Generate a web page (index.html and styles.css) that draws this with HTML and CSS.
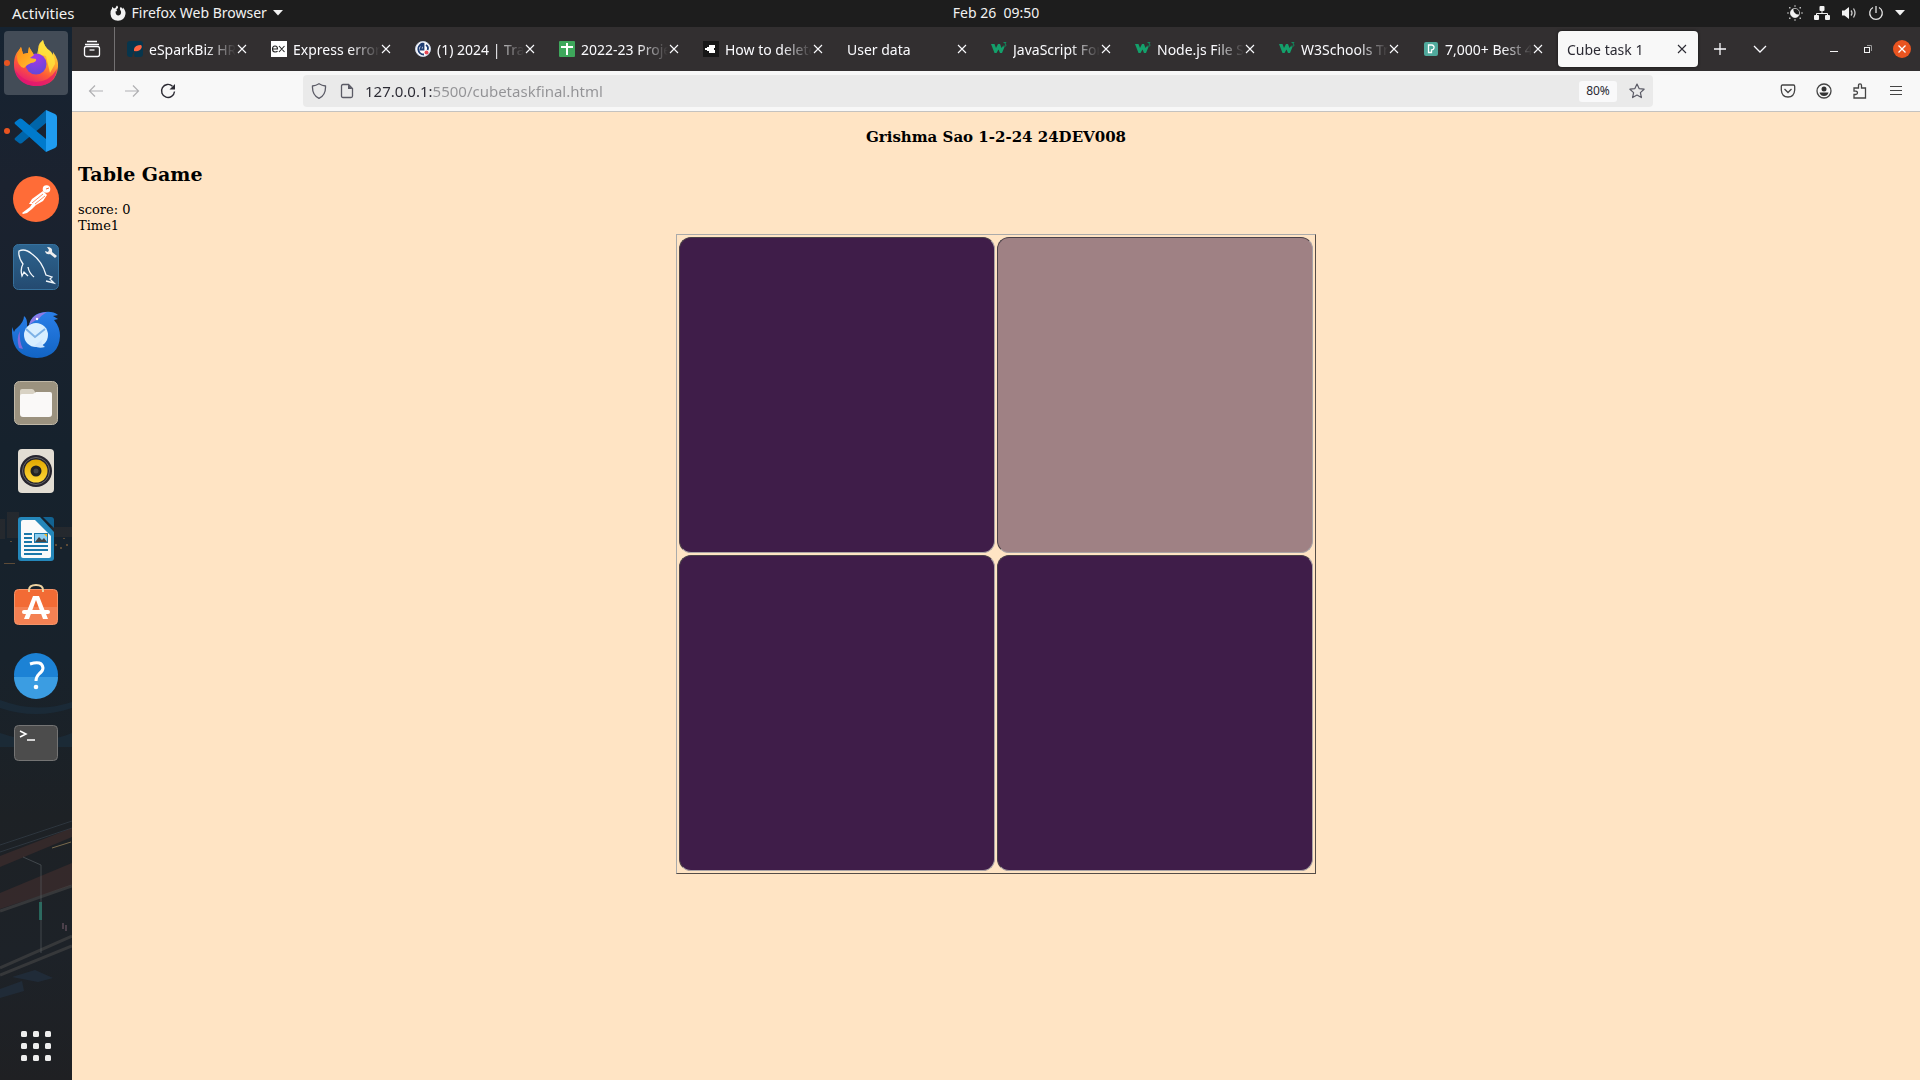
FILE: index.html
```html
<!DOCTYPE html>
<html lang="en">
<head>
<meta charset="utf-8">
<title>Cube task 1</title>
<link rel="stylesheet" href="styles.css">
</head>
<body>
<svg class="defs" width="0" height="0" aria-hidden="true">
  <defs>
    <linearGradient id="ffBody" x1="0.8" y1="0" x2="0.3" y2="1"><stop offset="0" stop-color="#fff44f"/><stop offset=".35" stop-color="#ffb02e"/><stop offset=".65" stop-color="#ff5a36"/><stop offset="1" stop-color="#e3147d"/></linearGradient>
    <linearGradient id="ffEar" x1="0" y1="0" x2="1" y2="1"><stop offset="0" stop-color="#ff8a16"/><stop offset="1" stop-color="#ffc42e"/></linearGradient>
    <radialGradient id="ffGlobe" cx=".5" cy=".2" r=".9"><stop offset="0" stop-color="#a438e8"/><stop offset="1" stop-color="#5a4ad6"/></radialGradient>
    <linearGradient id="tb" x1="0" y1="0" x2="0" y2="1"><stop offset="0" stop-color="#2a7fe8"/><stop offset="1" stop-color="#1264c4"/></linearGradient>
    <linearGradient id="sql" x1="0" y1="0" x2="0" y2="1"><stop offset="0" stop-color="#2c648f"/><stop offset="1" stop-color="#244a70"/></linearGradient>
    <linearGradient id="gold" x1="0" y1="0" x2="0" y2="1"><stop offset="0" stop-color="#e2a800"/><stop offset="1" stop-color="#ffd83a"/></linearGradient>
    <symbol id="x" viewBox="0 0 12 12"><path d="M2 2l8 8M10 2l-8 8" fill="none" stroke="currentColor" stroke-width="1.1"/></symbol>
    <symbol id="w3" viewBox="0 0 16 16"><path d="M0 3h3.500l1.500 4 2-4h2l1.500 4 1.500-2 1.500 1-2.500 6H9L7.500 8.500 5.500 12H3.500z" fill="#14a06b"/><path d="M12.500 1.500h2.500l-1.200 1.500q1.600.2 1.200 1.600-.8 1.200-2.500.3" fill="none" stroke="#128a5d" stroke-width="1"/></symbol>
  </defs>
</svg>

<header class="panel">
  <div class="panel-left">
    <button class="panel-btn activities">Activities</button>
    <button class="panel-btn app-menu">
      <svg width="16" height="16" viewBox="0 0 16 16"><path d="M7 0.500C8 1.500 8.200 2.200 8 3L6.500 4.200 7 6 5.500 6.500Q5.500 10.500 8.500 10.500 11.500 10 11 6.500L9.800 4 10.500 2Q12 2.500 12.800 4L13 2.500Q16 6 15.500 9 14.500 15.500 8 15.800 1 15.500.5 9 .2 5.500 2 3.500L2.200 1.800 4 3.400 5.500 3Q5.800 1.500 7 .5z" fill="#f2f2f2"/></svg>
      <span>Firefox Web Browser</span>
      <svg width="10" height="6" viewBox="0 0 10 6"><path d="M0 0h10L5 5.500z" fill="#f2f2f2"/></svg>
    </button>
  </div>
  <time class="clock">Feb 26&nbsp; 09:50</time>
  <div class="tray">
    <svg width="16" height="16" viewBox="0 0 16 16"><circle cx="8" cy="8" r="4.600" fill="none" stroke="#aaa" stroke-width="1"/><path d="M6.500 3.600A4.600 4.600 0 1 0 12.300 9.500 5 5 0 0 1 6.500 3.600z" fill="#f2f2f2"/><g fill="#bbb"><path d="M7.500 0h1v2h-1zM7.500 14h1v2h-1zM0 7.500h2v1H0zM14 7.500h2v1h-2zM2 2h1.500v1.500H2zM12.500 2H14v1.500h-1.500zM2 12.500h1.500V14H2zM12.500 12.500H14V14h-1.500z"/></g></svg>
    <svg width="16" height="16" viewBox="0 0 16 16"><g fill="#f2f2f2"><rect x="5.500" y="1" width="5" height="5" rx="1"/><rect x="0" y="10" width="5" height="5" rx="1"/><rect x="11" y="10" width="5" height="5" rx="1"/></g><path d="M8 6v2.500M2.500 10V8.500h11V10" fill="none" stroke="#f2f2f2"/></svg>
    <svg width="16" height="16" viewBox="0 0 16 16"><path d="M1 5.500h2.500L8 2v12L3.500 10.500H1z" fill="#f2f2f2"/><path d="M10 5.500q2 2.500 0 5M12.500 3.500q3 4.500 0 9" fill="none" stroke="#ccc" stroke-width="1.300"/></svg>
    <svg width="16" height="16" viewBox="0 0 16 16"><path d="M5 2.500A6.300 6.300 0 1 0 11 2.500M8 1v7" fill="none" stroke="#e4e4e4" stroke-width="1.300"/></svg>
    <svg width="10" height="6" viewBox="0 0 10 6"><path d="M0 0h10L5 5.500z" fill="#f2f2f2"/></svg>
  </div>
</header>

<div class="desktop">
<nav class="dock" aria-label="Dock">
  <svg class="wallpaper" viewBox="0 0 72 1053" preserveAspectRatio="none" aria-hidden="true">
    <g fill="#443c36" opacity=".3"><path d="M7 485h12v26H7zM22 496h16v16H22zM0 492h5v20H0zM44 500h28v10H44z"/></g>
    <g fill="#c98a48" opacity=".4"><path d="M55 517h2v2h-2zM60 520h2v2h-2zM66 517h2v2h-2zM10 514h2v1h-2zM24 515h2v1h-2zM63 511h2v1h-2zM4 536h11v1H4z"/></g>
    <path d="M0 673q36 14 72 2v6q-36 12-72 0zM0 706q40 14 72 0v14H0z" fill="#1d3f58" opacity=".3"/>
    <path d="M0 818L72 794M0 825L72 801" stroke="#465562" opacity=".4"/>
    <path d="M0 829L72 801v9L0 840zM0 866L72 836v22L0 882z" fill="#6a3b35" opacity=".3"/>
    <path d="M0 884L72 859M0 941L72 909M0 948L72 919" stroke="#706b66" stroke-width="3" opacity=".3"/>
    <path d="M52 821L71 815" stroke="#b79b67" opacity=".6"/>
    <path d="M23 830l18 8v88" fill="none" stroke="#5a6165" opacity=".6"/>
    <path d="M39 875h3v18h-3z" fill="#2c8171" opacity=".7"/>
    <path d="M62 896h2v6h-2zM65 898h2v6h-2z" fill="#6a5563" opacity=".6"/>
    <path d="M12 950l23-7 18 8-15 4zM0 962l22-8 2 10-24 7z" fill="#27415f" opacity=".3"/>
  </svg>
  <button class="dock-item running active" aria-label="Firefox"><svg width="48" height="48" viewBox="0 0 48 48"><path d="M24 47C11 47 2 38 2 26 2 18 4 14 7 11l2-3 2 7 5-1 1-6 5 8 5-1Q24 6 31 1q1 7 7 11 2 2 3 5l0-4q6 8 5 15-2 19-22 19z" fill="url(#ffBody)"/><path d="M25 15Q27 6 31 1q1 7 7 11 5 4 5 13L38 34 34 17z" fill="#ffe53d" opacity=".8"/><circle cx="24" cy="25" r="10.500" fill="url(#ffGlobe)"/><path d="M7 11l2-3 2 7 5-1 1-6 5 8-4 3 6 1q1 3-5 4-5 2-7 5Q5 27 5 17z" fill="url(#ffEar)"/><path d="M3 31q8 12 21 12T45 30q-2 17-21 17Q6 46 3 31z" fill="#df156e" opacity=".7"/></svg></button>
  <button class="dock-item running" aria-label="Visual Studio Code"><svg width="48" height="48" viewBox="0 0 48 48"><path d="M3 31q-1 1 0 2l4 3q1 1 3 0L34 16V3z" fill="#0065a9"/><path d="M3 17q-1-1 0-2l4-3q1-1 3 0L34 32v13z" fill="#007acc"/><path d="M34 3l9 4q2 1 2 3v28q0 2-2 3l-9 4z" fill="#1f9cf0"/></svg></button>
  <button class="dock-item" aria-label="Postman"><svg width="48" height="48" viewBox="0 0 48 48"><circle cx="24" cy="24" r="23" fill="#ff6c37"/><circle cx="34.500" cy="14" r="3.800" fill="#fff"/><path d="M34 14l3-1" stroke="#ff6c37"/><path d="M31 16L20 24 17 29l3 0-2 3-8 6 1 1 4-1 5-4 4-4 7-4 4-6z" fill="#fff"/><path d="M31 19L20 28M33 21l-10 8" stroke="#ff6c37" stroke-width=".8"/></svg></button>
  <button class="dock-item" aria-label="MySQL Workbench"><svg width="48" height="48" viewBox="0 0 48 48"><rect x="1.500" y="1.500" width="45" height="45" rx="5" fill="url(#sql)" stroke="#36719d"/><path d="M16 33l-4-4-2 4Q8 26 11 21 6 14 7 8q6-3 13 3 10 7 14 21l6 2-2 2 4 4-8-2M16 24q1 6 6 10" fill="none" stroke="#f2f7fb" stroke-width="1.300"/><path d="M35 4l2 3-1 2-3-1q1 4 5 3l5 4 2-2-5-4q1-5-5-5z" fill="#eee"/></svg></button>
  <button class="dock-item" aria-label="Thunderbird"><svg width="48" height="48" viewBox="0 0 48 48"><path d="M5 17Q12 11 12 5q4 3 3 11L17 14Q20 2 33 1q8-1 13 3l-5 1 5 3-4 1Q48 16 48 25 47 46 25 47 1 46 0 22l0-6 2 5q1-3 3-4z" fill="url(#tb)"/><path d="M7 37Q4 27 8 20q-1 10 3 18z" fill="#8269d8"/><path d="M17 14Q20 2 35 1q-7 4-8 7-4 1-10 6z" fill="#8d7be6"/><circle cx="24" cy="24" r="12" fill="#d9efff"/><path d="M14 18l9 8 10-8" fill="none" stroke="#7db2e6" stroke-width="2"/><path d="M22 35q5 3 11 1-6-4-2-8z" fill="#cbe5ff"/><circle cx="25" cy="8" r="1.200" fill="#fff"/></svg></button>
  <button class="dock-item" aria-label="Files"><svg width="48" height="48" viewBox="0 0 48 48"><rect x="2.500" y="2.500" width="43" height="43" rx="5" fill="#9b927f" stroke="#c0b8a7"/><path d="M8 12q0-2 2-2h10q2 0 3 3v5H8z" fill="#d8d2c4"/><path d="M8 17q0-2 2-2h11l3-2h14q2 0 2 2v20q0 3-3 3H11q-3 0-3-3z" fill="#faf9f8"/></svg></button>
  <button class="dock-item" aria-label="Rhythmbox"><svg width="48" height="48" viewBox="0 0 48 48"><rect x="6" y="2" width="36" height="44" rx="4" fill="#e2ddd3"/><circle cx="24" cy="24" r="16" fill="#26242e"/><circle cx="24" cy="24" r="13.500" fill="none" stroke="#666"/><circle cx="24" cy="24" r="11.500" fill="url(#gold)"/><circle cx="24" cy="24" r="5.500" fill="#222"/><circle cx="24" cy="24" r="2.500" fill="#444"/></svg></button>
  <button class="dock-item" aria-label="LibreOffice Writer"><svg width="48" height="48" viewBox="0 0 48 48"><path d="M9 2h19l14 15v26q0 3-3 3H9q-3 0-3-3V5q0-3 3-3z" fill="#2487ba"/><path d="M31 2h8q3 0 3 3v8z" fill="#126392"/><path d="M11 5h12l16 16v20q0 2-2 2H11q-2 0-2-2V7q0-2 2-2z" fill="#fafafa"/><path d="M12 19h8M12 23h8M12 27h8M12 31h24M12 35h24M12 39h18" stroke="#1b78aa" stroke-width="2"/><rect x="22.500" y="18.500" width="13" height="9" fill="#8ccdf0" stroke="#1b78aa"/><path d="M23 27l4-5 3 3 2-2 3 4z" fill="#444"/><path d="M32 19h3v3z" fill="#f8b315"/></svg></button>
  <button class="dock-item" aria-label="Ubuntu Software"><svg width="48" height="48" viewBox="0 0 48 48"><rect x="2.500" y="6.500" width="43" height="35" rx="4" fill="#f26b35" stroke="#f39368"/><path d="M17 9V7q0-5 7-5t7 5v2" fill="none" stroke="#eed3a1" stroke-width="2"/><path d="M3 24h42v14q0 3-3 3H6q-3 0-3-3z" fill="#fff" opacity=".15"/><path d="M12 36l9-23h6l9 23h-5L24 17 17 36z" fill="#fff"/><rect x="10" y="27" width="28" height="4" rx="2" fill="#fff"/></svg></button>
  <button class="dock-item" aria-label="Help"><svg width="48" height="48" viewBox="0 0 48 48"><circle cx="24" cy="24" r="22" fill="#1c82d5"/><path d="M2 26h44a22 22 0 0 1-44 0z" fill="#3b9de2"/><path d="M18 13q12-4 13 4 0 3-4 6-3 3-3 7" fill="none" stroke="#fff" stroke-width="3"/><circle cx="24" cy="36" r="2.300" fill="#fff"/></svg></button>
  <button class="dock-item" aria-label="Terminal"><svg width="48" height="48" viewBox="0 0 48 48"><rect x="2.500" y="6.500" width="43" height="35" rx="4" fill="#4c4c4c" stroke="#747474"/><path d="M8 12l6 3-6 3M15 21h8" fill="none" stroke="#fff" stroke-width="1.500"/></svg></button>
  <button class="dock-item apps" aria-label="Show Applications"><svg width="48" height="48" viewBox="0 0 48 48"><g fill="#eee"><rect x="9" y="9" width="6" height="6" rx="1.500"/><rect x="21" y="9" width="6" height="6" rx="1.500"/><rect x="33" y="9" width="6" height="6" rx="1.500"/><rect x="9" y="21" width="6" height="6" rx="1.500"/><rect x="21" y="21" width="6" height="6" rx="1.500"/><rect x="33" y="21" width="6" height="6" rx="1.500"/><rect x="9" y="33" width="6" height="6" rx="1.500"/><rect x="21" y="33" width="6" height="6" rx="1.500"/><rect x="33" y="33" width="6" height="6" rx="1.500"/></g></svg></button>
</nav>

<div class="browser">
  <div class="tabbar">
    <button class="view-btn" aria-label="Recent browsing"><svg width="18" height="18" viewBox="0 0 18 18" fill="none" stroke="#fbfbfe" stroke-width="1.300"><path d="M4 1.500h10M2 4.500h14"/><rect x="1.500" y="6.500" width="15" height="10" rx="2"/><path d="M6.500 10h5"/></svg></button>
    <div class="tabs">
      <div class="tab"><svg width="16" height="16" viewBox="0 0 16 16"><rect width="16" height="16" rx="3" fill="#07364d"/><path d="M7 8q1-4 7-4 2 2-1 5-3 2-6 1z" fill="#ff6542"/><path d="M5 16q1-6 4-6-3 2-1 6z" fill="#302f31"/></svg><span class="title">eSparkBiz HRMS</span><button class="close" aria-label="Close tab"><svg width="12" height="12"><use href="#x"/></svg></button></div>
      <div class="tab"><svg width="16" height="16" viewBox="0 0 16 16"><rect width="16" height="16" fill="#fff"/><path d="M1.500 8h5q0-3-2.500-3T1.500 8t2.500 3q2 0 2.500-1M8 5l5.500 6M13.500 5L8 11" fill="none" stroke="#222" stroke-width="1.100"/></svg><span class="title">Express error handling</span><button class="close" aria-label="Close tab"><svg width="12" height="12"><use href="#x"/></svg></button></div>
      <div class="tab"><svg width="16" height="16" viewBox="0 0 16 16"><circle cx="8" cy="8" r="7.500" fill="#fff" stroke="#c9d2e2"/><path d="M8.500 2.500A5.500 5.500 0 1 0 9 13.500M8.500 2v6.500H5.500Q5.500 5.500 8.500 3M11 4q3 2 1.500 5" fill="none" stroke="#203e73" stroke-width="1.800"/><circle cx="11.500" cy="11.500" r="2" fill="#e84956"/></svg><span class="title">(1) 2024 | Training</span><button class="close" aria-label="Close tab"><svg width="12" height="12"><use href="#x"/></svg></button></div>
      <div class="tab"><svg width="16" height="16" viewBox="0 0 16 16"><rect width="16" height="16" rx="1" fill="#3ea75b"/><path d="M2 6h12M8 2v12" stroke="#fff" stroke-width="2"/></svg><span class="title">2022-23 Project list</span><button class="close" aria-label="Close tab"><svg width="12" height="12"><use href="#x"/></svg></button></div>
      <div class="tab"><svg width="16" height="16" viewBox="0 0 16 16"><rect width="16" height="16" fill="#171717"/><path d="M6 4h6v3h-1v2h1v3H6v-2H4V9H2V7h2V6h2z" fill="#fff"/></svg><span class="title">How to delete a file</span><button class="close" aria-label="Close tab"><svg width="12" height="12"><use href="#x"/></svg></button></div>
      <div class="tab"><span class="title">User data</span><button class="close" aria-label="Close tab"><svg width="12" height="12"><use href="#x"/></svg></button></div>
      <div class="tab"><svg width="16" height="16"><use href="#w3"/></svg><span class="title">JavaScript Form</span><button class="close" aria-label="Close tab"><svg width="12" height="12"><use href="#x"/></svg></button></div>
      <div class="tab"><svg width="16" height="16"><use href="#w3"/></svg><span class="title">Node.js File System</span><button class="close" aria-label="Close tab"><svg width="12" height="12"><use href="#x"/></svg></button></div>
      <div class="tab"><svg width="16" height="16"><use href="#w3"/></svg><span class="title">W3Schools Tryit</span><button class="close" aria-label="Close tab"><svg width="12" height="12"><use href="#x"/></svg></button></div>
      <div class="tab"><svg width="16" height="16" viewBox="0 0 16 16"><rect x="1" y="1" width="14" height="14" rx="2" fill="#50a99c"/><path d="M5.500 4H9q2.500.5 2 3-.5 2-2.500 2v2.500h-3z" fill="none" stroke="#fff" stroke-width="1.300"/></svg><span class="title">7,000+ Best 4K</span><button class="close" aria-label="Close tab"><svg width="12" height="12"><use href="#x"/></svg></button></div>
      <div class="tab selected"><span class="title">Cube task 1</span><button class="close" aria-label="Close tab"><svg width="12" height="12"><use href="#x"/></svg></button></div>
    </div>
    <button class="tab-tool" aria-label="New tab"><svg width="14" height="14" viewBox="0 0 14 14"><path d="M7 1v12M1 7h12" stroke="#fbfbfe" stroke-width="1.300"/></svg></button>
    <button class="tab-tool" aria-label="List all tabs"><svg width="14" height="14" viewBox="0 0 14 14"><path d="M1 4l6 6 6-6" fill="none" stroke="#fbfbfe" stroke-width="1.300"/></svg></button>
    <div class="window-btns">
      <button aria-label="Minimize"><svg width="18" height="18" viewBox="0 0 18 18"><path d="M5 11.500h8" stroke="#f4f4f4"/></svg></button>
      <button aria-label="Restore"><svg width="18" height="18" viewBox="0 0 18 18"><rect x="5.500" y="7.500" width="5" height="5" fill="none" stroke="#f4f4f4"/><path d="M8 5.500h4.500V11" fill="none" stroke="#999"/></svg></button>
      <button aria-label="Close window"><svg width="18" height="18" viewBox="0 0 18 18"><circle cx="9" cy="9" r="9" fill="#e95420"/><path d="M5.500 5.500l7 7M12.500 5.500l-7 7" stroke="#fff" stroke-width="1.300"/></svg></button>
    </div>
  </div>

  <div class="toolbar">
    <div class="nav-btns">
      <button class="tool" aria-label="Back"><svg width="16" height="16" viewBox="0 0 16 16"><path d="M15 8H1.500M7 2.500L1.500 8 7 13.500" fill="none" stroke="#b0b0b3" stroke-width="1.200"/></svg></button>
      <button class="tool" aria-label="Forward"><svg width="16" height="16" viewBox="0 0 16 16"><path d="M1 8h13.500M9 2.500L14.500 8 9 13.500" fill="none" stroke="#b0b0b3" stroke-width="1.200"/></svg></button>
      <button class="tool" aria-label="Reload"><svg width="16" height="16" viewBox="0 0 16 16"><path d="M12.500 3.200A6.500 6.500 0 1 0 14.500 8.500" fill="none" stroke="#2b2a33" stroke-width="1.400"/><path d="M15 1v5.500H9.500z" fill="#2b2a33"/></svg></button>
    </div>
    <div class="urlbar">
      <svg width="16" height="16" viewBox="0 0 16 16"><path d="M8 .7Q11 2.500 14.500 3 15 12 8 15.300 1 12 1.500 3 5 2.500 8 .7z" fill="none" stroke="#5b5b66" stroke-width="1.300"/></svg>
      <svg width="16" height="16" viewBox="0 0 16 16"><path d="M4 1.500h5.500l4 4V13q0 1.500-1.500 1.500H4q-1.500 0-1.500-1.500V3Q2.500 1.500 4 1.500z" fill="none" stroke="#5b5b66" stroke-width="1.300"/><path d="M9 1.500V6h4.500z" fill="#5b5b66"/></svg>
      <input class="address" type="text" aria-label="Address" value="127.0.0.1:5500/cubetaskfinal.html">
      <button class="zoom-level">80%</button>
      <button class="star" aria-label="Bookmark"><svg width="16" height="16" viewBox="0 0 16 16"><path d="M8 1l2.100 4.600 5 .6-3.700 3.400 1 5L8 12.100 3.600 14.600l1-5L.9 6.200l5-.6z" fill="none" stroke="#5b5b66" stroke-width="1.200" stroke-linejoin="round"/></svg></button>
    </div>
    <div class="right-btns">
      <button class="tool" aria-label="Pocket"><svg width="16" height="16" viewBox="0 0 16 16"><path d="M2.500 2h11q1.200 0 1.200 1.500V7q-.5 7-6.700 7T1.300 7V3.500Q1.300 2 2.500 2z" fill="none" stroke="#444" stroke-width="1.300"/><path d="M4.500 6L8 9.500 11.500 6" fill="none" stroke="#444" stroke-width="1.300"/></svg></button>
      <button class="tool" aria-label="Account"><svg width="16" height="16" viewBox="0 0 16 16"><circle cx="8" cy="8" r="7" fill="none" stroke="#444" stroke-width="1.300"/><circle cx="8" cy="6" r="2.500" fill="#333"/><path d="M3.500 9.500h9q-1 3.500-4.500 3.500T3.500 9.500z" fill="#333"/></svg></button>
      <button class="tool" aria-label="Extensions"><svg width="16" height="16" viewBox="0 0 16 16"><path d="M2 6.500V5h4.500V2.500Q6.500.8 8 .8t1.500 1.700V5h4v10H2v-3.500h2Q5.500 11 5.500 9.800T4 8.200H2z" fill="none" stroke="#444" stroke-width="1.300"/></svg></button>
      <button class="tool" aria-label="Menu"><svg width="16" height="16" viewBox="0 0 16 16"><path d="M2 3.500h12M2 7.500h12M2 11.500h12" stroke="#444" stroke-width="1.200"/></svg></button>
    </div>
  </div>

  <main class="page">
    <h3>Grishma Sao 1-2-24 24DEV008</h3>
    <h2>Table Game</h2>
    <div class="status">score: 0</div>
    <div class="status">Time1</div>
    <table class="board">
      <tr><td></td><td class="lit"></td></tr>
      <tr><td></td><td></td></tr>
    </table>
  </main>
</div>
</div>
</body>
</html>
```
FILE: styles.css
```css
* { box-sizing: border-box; }
body {
  margin: 0;
  min-height: 100vh;
  display: flex;
  flex-direction: column;
  font: 14px/20px "Noto Sans", "Open Sans", sans-serif;
  background: #1d1d1d;
}
button {
  border: 0;
  padding: 0;
  background: none;
  font: inherit;
  color: inherit;
}
svg { display: block; flex: none; }
.defs { position: absolute; }

/* Top panel */
.panel {
  display: grid;
  grid-template-columns: 1fr auto 1fr;
  align-items: center;
  height: 27px;
  padding: 0 0 2px 72px;
  background: #1d1d1d;
  color: #f2f2f2;
}
.panel-left { display: flex; gap: 35px; margin-left: -60px; }
.panel-btn { display: flex; align-items: center; gap: 6px; }
.activities { font-size: 15px; }
.tray { display: flex; align-items: center; justify-content: flex-end; gap: 11px; padding-right: 15px; }

.desktop { flex: 1; display: flex; }

/* Dock */
.dock {
  position: relative;
  flex: none;
  width: 72px;
  padding: 4px 4px 2px;
  display: flex;
  flex-direction: column;
  gap: 4px;
  background: linear-gradient(#152331, #1b222f 15%, #16222d 40%, #18222b 60%, #1d2125 75%, #1d2228 88%, #1f2023);
}
.wallpaper { position: absolute; inset: 0; width: 100%; height: 100%; }
.dock-item {
  position: relative;
  display: flex;
  align-items: center;
  justify-content: center;
  height: 64px;
  border-radius: 4px;
}
.dock-item.active { background: #434c57; }
.dock-item.running::before {
  content: "";
  position: absolute;
  left: 0;
  top: 29px;
  width: 6px;
  height: 6px;
  border-radius: 50%;
  background: #e95420;
}
.apps { margin-top: auto; }

/* Browser */
.browser { flex: 1; min-width: 0; display: flex; flex-direction: column; }
.tabbar {
  display: flex;
  align-items: center;
  height: 44px;
  padding-right: 9px;
  background: #322f30;
  color: #fbfbfe;
}
.view-btn {
  display: flex;
  align-items: center;
  justify-content: center;
  width: 43px;
  height: 44px;
  padding-right: 2px;
  border-right: 1px solid #737172;
}
.tabs { display: flex; flex: 0 1 1585px; min-width: 0; gap: 4px; padding: 0 2px 0 3px; }
.tab {
  flex: 1 1 0;
  min-width: 0;
  display: flex;
  align-items: center;
  height: 36px;
  padding: 0 10px 0 9px;
  border-radius: 4px;
}
.tab > svg { margin-right: 6px; }
.title {
  flex: 1;
  padding-top: 1px;
  overflow: hidden;
  white-space: nowrap;
  mask-image: linear-gradient(to left, transparent, #000 30px);
}
.close {
  flex: none;
  width: 12px;
  height: 12px;
  color: inherit;
}
.selected { background: #f8f8f8; color: #2b2a33; box-shadow: 0 0 3px #111; }
.tab-tool { display: flex; justify-content: center; width: 40px; }
.window-btns { display: flex; gap: 16px; margin-left: auto; }

.toolbar {
  display: flex;
  align-items: center;
  height: 41px;
  padding: 0 6px;
  background: #f8f8f8;
  border-bottom: 1px solid #c4c2c0;
  color: #2b2a33;
}
.nav-btns, .right-btns { display: flex; }
.tool { display: flex; align-items: center; justify-content: center; width: 36px; height: 32px; }
.urlbar {
  flex: 0 1 1350px;
  display: flex;
  align-items: center;
  gap: 12px;
  height: 32px;
  margin-left: 117px;
  padding: 0 8px;
  border-radius: 4px;
  background: #eaeaea;
}
.address {
  flex: 1;
  min-width: 0;
  height: 22px;
  border: 0;
  padding: 0;
  margin-left: -2px;
  font: inherit;
  font-size: 15px;
  color: transparent;
  background: linear-gradient(to right, #2b2a33 67px, #929295 67px);
  background-clip: text;
}
.zoom-level {
  width: 38px;
  height: 21px;
  border-radius: 3px;
  background: #f9f9fa;
  font-size: 12px;
}
.right-btns { margin-left: auto; }

/* Game page */
.page {
  flex: 1;
  padding: 0 6px 6px;
  background: #ffe4c4;
  color: #000;
  font: 13px/16px "DejaVu Serif", serif;
}
.page h3 { margin: 16px 0; text-align: center; font-size: 15px; line-height: 18px; }
.page h2 { margin: 17px 0; font-size: 19px; line-height: 22px; }
.board {
  width: 640px;
  margin: 0 auto;
  border: 1px solid;
  border-color: #aaaaaa #554d48 #554d48 #aaaaaa;
  border-spacing: 2px;
}
.board td {
  height: 316px;
  padding: 0;
  border: 1px solid;
  border-color: #4a4148 #a9a3a6 #a9a3a6 #4a4148;
  border-radius: 12px;
  background: #3f1d49;
}
.board .lit { background: #9f8184; }
```
